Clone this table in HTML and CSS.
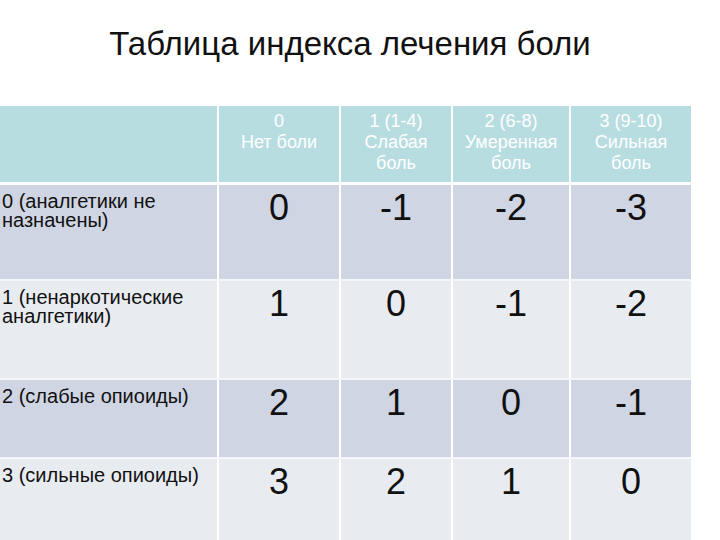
FILE: index.html
```html
<!DOCTYPE html>
<html lang="ru">
<head>
<meta charset="utf-8">
<title>Таблица индекса лечения боли</title>
<link rel="stylesheet" href="styles.css">
</head>
<body>
<div class="slide">
  <h1 class="title">Таблица индекса лечения боли</h1>
  <table class="grid">
    <colgroup>
      <col class="c0"><col class="c1"><col class="c2"><col class="c3"><col class="c4">
    </colgroup>
    <thead>
      <tr class="head">
        <th></th>
        <th>0<br>Нет боли</th>
        <th>1 (1-4)<br>Слабая<br>боль</th>
        <th>2 (6-8)<br>Умеренная<br>боль</th>
        <th>3 (9-10)<br>Сильная<br>боль</th>
      </tr>
    </thead>
    <tbody>
      <tr class="odd r1">
        <td class="label">0 (аналгетики не назначены)</td>
        <td class="num">0</td><td class="num">-1</td><td class="num">-2</td><td class="num">-3</td>
      </tr>
      <tr class="even r2">
        <td class="label">1 (ненаркотические аналгетики)</td>
        <td class="num">1</td><td class="num">0</td><td class="num">-1</td><td class="num">-2</td>
      </tr>
      <tr class="odd r3">
        <td class="label">2 (слабые опиоиды)</td>
        <td class="num">2</td><td class="num">1</td><td class="num">0</td><td class="num">-1</td>
      </tr>
      <tr class="even r4">
        <td class="label">3 (сильные опиоиды)</td>
        <td class="num">3</td><td class="num">2</td><td class="num">1</td><td class="num">0</td>
      </tr>
    </tbody>
  </table>
</div>
</body>
</html>
```

FILE: styles.css
```css
html, body {
  margin: 0;
  padding: 0;
  background: #ffffff;
}
.slide {
  width: 720px;
  height: 540px;
  overflow: hidden;
  font-family: "Liberation Sans", Arial, sans-serif;
  color: #111111;
}
.title {
  margin: 0;
  padding: 24px 20px 0 0;
  height: 106px;
  box-sizing: border-box;
  font-size: 33px;
  font-weight: normal;
  line-height: 40px;
  text-align: center;
  color: #111111;
}
.grid {
  border-collapse: collapse;
  table-layout: fixed;
  width: 691px;
}
.c0 { width: 218px; }
.c1 { width: 122px; }
.c2 { width: 112px; }
.c3 { width: 118px; }
.c4 { width: 121px; }
.grid th, .grid td {
  border-left: 2px solid #ffffff;
  vertical-align: top;
  box-sizing: border-box;
}
.grid th:first-child, .grid td:first-child {
  border-left: none;
}
.head th {
  background: #b8dde1;
  height: 77px;
  border-bottom: 3px solid #ffffff;
  color: #ffffff;
  font-size: 18px;
  font-weight: normal;
  line-height: 21px;
  text-align: center;
  padding: 5px 0 0 0;
}
.odd td { background: #cfd5e3; }
.even td { background: #e8ecf1; }
.grid tbody tr td { border-bottom: 2px solid #f4f6f9; }
.r1 td { height: 97px; }
.r2 td { height: 99px; }
.r3 td { height: 79px; }
.r4 td { height: 90px; border-bottom: none; }
.label {
  font-size: 20px;
  line-height: 19px;
  padding: 7px 4px 0 2px;
  text-align: left;
}
.num {
  font-size: 36px;
  line-height: 40px;
  text-align: center;
  padding: 3px 0 0 0;
}
```
